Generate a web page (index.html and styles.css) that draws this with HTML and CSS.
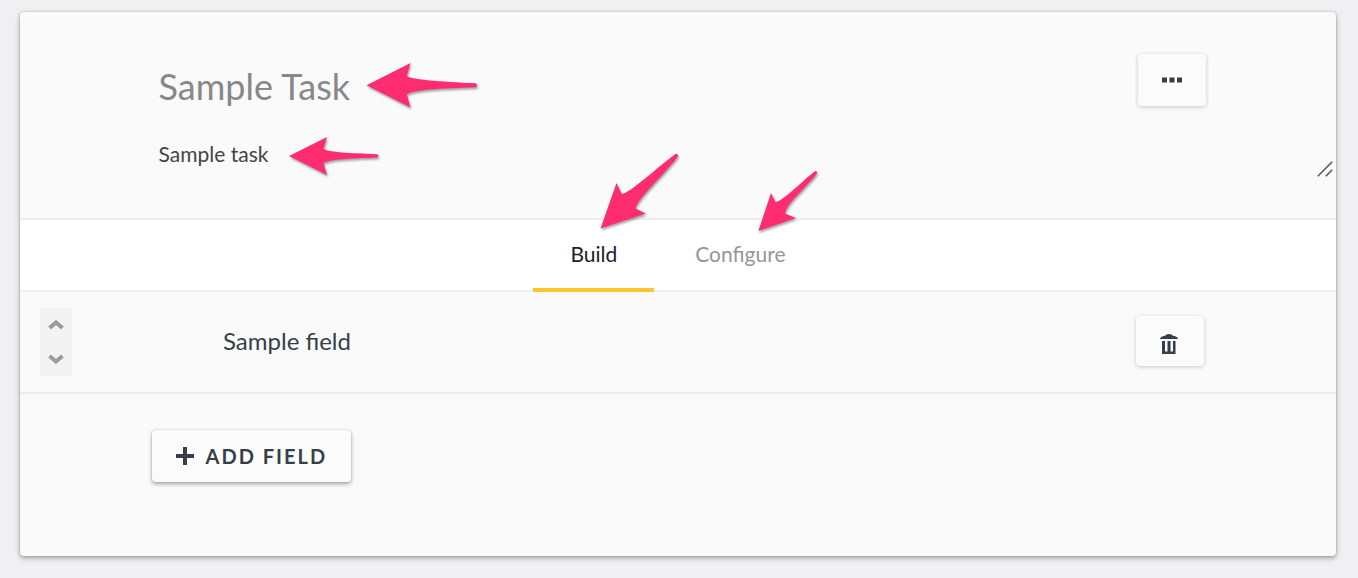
FILE: index.html
```html
<!DOCTYPE html>
<html lang="en">
<head>
<meta charset="utf-8">
<title>Sample Task</title>
<link rel="stylesheet" href="styles.css">
</head>
<body>
<main class="card">
  <header class="task-header">
    <div class="task-top">
      <input class="task-title" type="text" aria-label="Task title" value="Sample Task">
      <button class="button button-icon" type="button" aria-label="More options">
        <svg width="20" height="6" viewBox="0 0 20 6" fill="#363c48"><path d="M0 .5h5v5H0zM7.500.5h5v5h-5zM15 .5h5v5h-5z"/></svg>
      </button>
    </div>
    <textarea class="task-description" aria-label="Task description" rows="1">Sample task</textarea>
    <svg class="grip" width="16" height="16" viewBox="0 0 16 16" fill="none" stroke="#555" stroke-width="1.5"><path d="M.8 15.2 15.2.8M8.800 15.200l6.400-6.400"/></svg>
    <svg class="arrow arrow-title" width="116" height="54" viewBox="364 60 116 54"><path d="M366.500 85.300 410.500 63l-3.700 13C413 80 440 81.500 475.500 83.300Q477 83.500 477 85.200 477 87 475.500 87.200C440 88.500 413 89.500 406.800 94.500L410.500 107.500Z"/></svg>
    <svg class="arrow arrow-description" width="96" height="48" viewBox="286 134 96 48"><path d="M289 156 327 137 323.500 149C330 152.500 350 153 377 154.200Q378.500 154.400 378.500 155.800 378.500 157.200 377 157.400C350 158.500 330 159 323.500 163L327 175Z"/></svg>
  </header>

  <nav class="tabs" aria-label="Task sections">
    <button class="tab tab-active" type="button">Build
      <svg class="arrow arrow-build" width="86" height="84" viewBox="598 150 86 84"><path d="M601.500 228.500 617.500 183 622.800 194C631 193 654 171 676 154.300Q677.500 153.300 678.700 154.500 679.500 155.500 678.500 157C662 178 639 198 636.500 208.500L647 213.500Z"/></svg>
    </button>
    <button class="tab" type="button">Configure
      <svg class="arrow arrow-configure" width="68" height="70" viewBox="754 168 68 70"><path d="M758.300 231 771 193 775.500 202C783 201 799 184 814.500 171.500Q816 170.500 816.800 171.700 817.500 172.700 816.500 174C803 191 787 203 785 213.500L796 218Z"/></svg>
    </button>
  </nav>

  <section class="field-row">
    <div class="mover">
      <button class="mover-button" type="button" aria-label="Move field up">
        <svg width="16" height="10" viewBox="0 0 16 10"><path d="M1.500 8 8 2.500 14.500 8"/></svg>
      </button>
      <button class="mover-button" type="button" aria-label="Move field down">
        <svg width="16" height="10" viewBox="0 0 16 10"><path d="M1.500 2 8 7.500 14.500 2"/></svg>
      </button>
    </div>
    <span class="field-name">Sample field</span>
    <button class="button button-icon button-trash" type="button" aria-label="Delete field">
      <svg width="18" height="20" viewBox="0 0 18 20" fill="#363f48"><path d="M5 1.700Q6 0 9 0T13 1.700Q18 2.500 18 5H0Q0 2.500 5 1.700ZM2 7h3v10.500h2.500V7h3v10.500H13V7h2.500v13H2Z"/></svg>
    </button>
  </section>

  <section class="actions">
    <button class="button button-add" type="button">
      <svg width="18" height="18" viewBox="0 0 18 18" fill="#363f48"><path d="M7 0h4v7h7v4h-7v7H7v-7H0V7h7Z"/></svg>
      Add field
    </button>
  </section>
</main>
</body>
</html>
```
FILE: styles.css
```css
* {
  box-sizing: border-box;
}

body {
  margin: 0;
  padding: 12px 22px 22px 20px;
  background: #f0f0f2;
  color: #363f48;
  font-family: Lato, "Liberation Sans", sans-serif;
}

button,
input,
textarea {
  margin: 0;
  padding: 0;
  border: 0;
  background: none;
  color: inherit;
  font: inherit;
}

svg {
  flex: none;
}

.card {
  border-radius: 4px;
  background: #fafafa;
  box-shadow: 0 2px 5px rgba(0, 0, 0, 0.34), 0 0 2px rgba(0, 0, 0, 0.18);
}

.task-header {
  position: relative;
  padding: 42px 130px 48px 10%;
  border-bottom: 2px solid #ededed;
}

.task-top {
  display: flex;
  align-items: center;
  justify-content: space-between;
}

.task-title {
  flex: 1;
  min-width: 0;
  height: 52px;
  padding: 12px 7px 0;
  color: #888;
  font-size: 36px;
}

.task-description {
  display: block;
  width: 100%;
  height: 32px;
  margin-top: 32px;
  padding: 0 7px;
  overflow: hidden;
  color: #444;
  font-size: 21px;
  line-height: 32px;
  resize: none;
}

.grip {
  position: absolute;
  right: 3px;
  bottom: 41px;
}

.button {
  display: flex;
  align-items: center;
  justify-content: center;
  border-radius: 4px;
  background: #fbfbfb;
}

.button-icon {
  width: 68px;
  height: 52px;
  box-shadow: 0 1px 4px rgba(0, 0, 0, 0.2);
}

.button-trash {
  height: 50px;
  padding: 6px 2px 0 0;
}

.tabs {
  display: flex;
  justify-content: center;
  gap: 4px;
  height: 72px;
  border-bottom: 2px solid #ededed;
  background: #fff;
}

.tab {
  position: relative;
  height: 72px;
  padding: 0 37px 2px;
  border-bottom: 4px solid transparent;
  color: #92969b;
  font-size: 21px;
}

.tab-active {
  border-color: #ffc32e;
  color: #1d212b;
}

.field-row {
  display: flex;
  align-items: center;
  height: 102px;
  padding: 0 10% 2px 20px;
  border-bottom: 2px solid #ededed;
}

.mover {
  display: flex;
  flex-direction: column;
  width: 32px;
  height: 68px;
  margin-top: 2px;
  border-radius: 3px;
  background: #f3f3f3;
}

.mover-button {
  display: flex;
  flex: 1;
  align-items: center;
  justify-content: center;
}

.mover-button path {
  fill: none;
  stroke: #989ca0;
  stroke-width: 4;
}

.field-name {
  flex: 1;
  margin-left: 151px;
  padding-bottom: 2px;
  font-size: 24px;
}

.actions {
  padding: 36px 10% 74px;
}

.button-add {
  gap: 12px;
  height: 52px;
  padding: 0 24px;
  box-shadow: 0 2px 4px rgba(0, 0, 0, 0.34), 0 0 2px rgba(0, 0, 0, 0.14);
  font-size: 20px;
  font-weight: 700;
  letter-spacing: 2px;
  text-transform: uppercase;
}

.arrow {
  position: absolute;
  z-index: 1;
  fill: #ff2d6f;
  filter: drop-shadow(1px 2px 1px rgba(0, 0, 0, 0.35));
  pointer-events: none;
}

.arrow-title {
  top: 48px;
  left: 344px;
}

.arrow-description {
  top: 122px;
  left: 266px;
}

.arrow-build {
  top: -70px;
  left: 64px;
}

.arrow-configure {
  top: -52px;
  left: 96px;
}
```
